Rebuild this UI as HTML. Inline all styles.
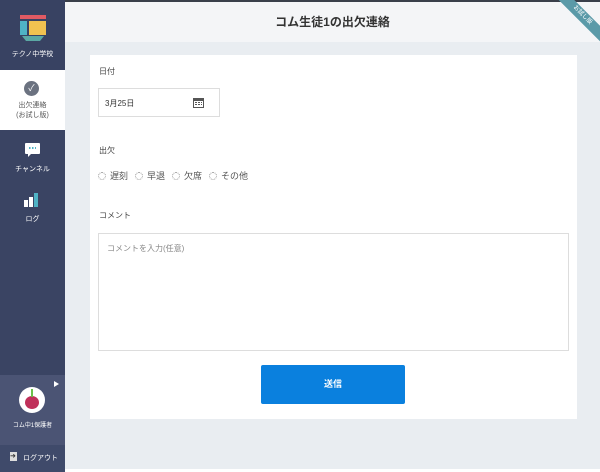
<!DOCTYPE html><html><head><meta charset="utf-8"><style>
*{margin:0;padding:0;box-sizing:border-box}
body{width:600px;height:472px;overflow:hidden;background:#e9edf1;font-family:"Liberation Sans","Noto Sans CJK JP",sans-serif;position:relative}
.sb{position:absolute;left:0;top:0;width:65px;height:472px;background:#3a4463}
.t{position:absolute;left:0;width:65px;text-align:center;color:#fff;font-size:7px}
.hdr{position:absolute;left:65px;top:0;right:0;height:42px;background:#f4f5f7;border-top:2px solid #3a3f4a}
.hdr h1{font-size:12px;font-weight:bold;color:#333;text-align:center;line-height:40px}
.card{position:absolute;left:90px;top:55px;width:487px;height:364px;background:#fff}
.lbl{position:absolute;left:9px;font-size:8px;color:#444}
.r{display:inline-block;width:8px;height:8px;border:1px dotted #999;border-radius:50%;vertical-align:-1px;margin-right:4px}
.rl{margin-right:7px}
</style></head><body>
<div class="sb">
 <div style="position:absolute;left:0;top:0;width:65px;height:70px;background:#384262"></div>
 <svg style="position:absolute;left:19px;top:14px" width="28" height="28" viewBox="0 0 28 28">
  <rect x="1" y="1" width="26" height="4" fill="#e05a63"/>
  <rect x="1" y="7" width="7" height="14" fill="#4fb3c5"/>
  <rect x="10" y="7" width="17" height="14" fill="#f1c250"/>
  <path d="M3 22h22l-4 5h-14z" fill="#5ba8a4"/>
 </svg>
 <div class="t" style="top:49px">テクノ中学校</div>
 <div style="position:absolute;left:0;top:70px;width:65px;height:60px;background:#fff"></div>
 <div style="position:absolute;left:24px;top:81px;width:15px;height:15px;border-radius:50%;background:#6b7280;color:#fff;font-size:9px;text-align:center;line-height:15px">✓</div>
 <div class="t" style="top:101px;color:#555;line-height:10px">出欠連絡<br>(お試し版)</div>
 <div style="position:absolute;left:25px;top:143px;width:15px;height:11px;background:#fff;border-radius:1px"><div style="position:absolute;left:4px;top:4px;width:7px;height:2px;background:repeating-linear-gradient(90deg,#4fb3c5 0 1.5px,transparent 1.5px 3px)"></div></div>
 <div style="position:absolute;left:28px;top:154px;border-top:3px solid #fff;border-right:3px solid transparent"></div>
 <div class="t" style="top:164px">チャンネル</div>
 <svg style="position:absolute;left:24px;top:193px" width="15" height="14"><rect x="0" y="7" width="4" height="7" fill="#fff"/><rect x="5" y="4" width="4" height="10" fill="#fff"/><rect x="10" y="0" width="4" height="14" fill="#4fb3c5"/></svg>
 <div class="t" style="top:214px">ログ</div>
 <div style="position:absolute;left:0;top:375px;width:65px;height:70px;background:#4b5474"></div>
 <div style="position:absolute;left:54px;top:381px;border-left:5px solid #fff;border-top:3px solid transparent;border-bottom:3px solid transparent"></div>
 <div style="position:absolute;left:19px;top:387px;width:26px;height:26px;border-radius:50%;background:#fff;overflow:hidden"><div style="position:absolute;left:6px;top:9px;width:14px;height:13px;border-radius:50%;background:#c0305a"></div><div style="position:absolute;left:12px;top:2px;width:2px;height:8px;background:#6cc04a"></div></div>
 <div class="t" style="top:420px;font-size:6px">コム中1保護者</div>
 <div style="position:absolute;left:0;top:445px;width:65px;height:27px;background:#3f4a6a"></div>
 <div style="position:absolute;left:10px;top:452px;width:7px;height:9px;background:#ddd;color:#333;font-size:7px;line-height:9px">➜</div>
 <div class="t" style="top:453px;left:8px;font-size:7px">ログアウト</div>
</div>
<div class="hdr"><h1>コム生徒1の出欠連絡</h1></div>
<div style="position:absolute;right:-20px;top:10px;width:76px;height:11px;background:#5b9aa8;transform:rotate(45deg);color:#fff;font-size:6px;text-align:center;line-height:11px">お試し版</div>
<div class="card">
 <div class="lbl" style="top:11px">日付</div>
 <div style="position:absolute;left:8px;top:33px;width:122px;height:29px;border:1px solid #ddd;font-size:8px;color:#333;padding:9px 0 0 6px">3月25日
  <svg style="position:absolute;left:94px;top:8px" width="11" height="11"><rect x="0" y="1" width="11" height="10" fill="#555"/><rect x="1" y="4" width="9" height="6" fill="#fff"/><g fill="#555"><rect x="2" y="5" width="2" height="1"/><rect x="5" y="5" width="2" height="1"/><rect x="8" y="5" width="1" height="1"/><rect x="2" y="7" width="2" height="1"/><rect x="5" y="7" width="2" height="1"/><rect x="8" y="7" width="1" height="1"/></g></svg></div>
 <div class="lbl" style="top:90px">出欠</div>
 <div style="position:absolute;left:8px;top:114px;font-size:9px;color:#555"><span class="r"></span><span class="rl">遅刻</span><span class="r"></span><span class="rl">早退</span><span class="r"></span><span class="rl">欠席</span><span class="r"></span><span>その他</span></div>
 <div class="lbl" style="top:155px">コメント</div>
 <div style="position:absolute;left:8px;top:178px;width:471px;height:118px;border:1px solid #ddd;font-size:8px;color:#888;padding:9px 8px">コメントを入力(任意)</div>
 <div style="position:absolute;left:171px;top:310px;width:144px;height:39px;background:#0a80de;border-radius:2px;color:#fff;font-size:9px;font-weight:bold;text-align:center;line-height:39px">送信</div>
</div>
<div style="position:absolute;left:65px;top:469px;right:0;height:3px;background:#fff"></div>
</body></html>
